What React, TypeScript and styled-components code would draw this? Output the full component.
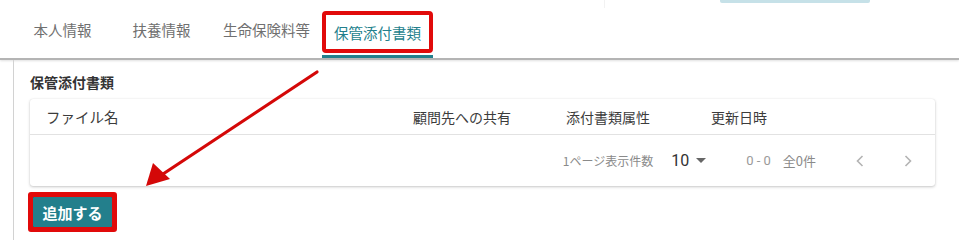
import React from "react";
import styled, { createGlobalStyle } from "styled-components";

const Global = createGlobalStyle`
  html, body { margin: 0; padding: 0; background: #fff; }
  body { font-family: "Noto Sans CJK JP", "Noto Sans", Roboto, sans-serif; color: #333; }
  * { box-sizing: border-box; }
`;

const TEAL = "#237f8c";
const RED = "#e10a0a";

const Page = styled.div`
  position: relative;
  width: 959px;
  height: 240px;
  overflow: hidden;
`;

const TabBar = styled.div`
  display: flex;
  height: 60px;
  padding-left: 13px;
  border-bottom: 2px solid #b4b4b4;
  box-shadow: 0 1px 2px rgba(0, 0, 0, 0.12);
`;

const Tab = styled.div<{ $active?: boolean; $pad?: number }>`
  min-width: 99px;
  height: 58px;
  padding: 3px ${(p) => (p.$active ? 0 : p.$pad ?? 13)}px ${(p) => (p.$active ? 2 : 0)}px;
  display: flex;
  align-items: ${(p) => (p.$active ? "flex-end" : "center")};
  justify-content: center;
  font-size: 14.5px;
  color: ${(p) => (p.$active ? TEAL : "#707070")};
  border-bottom: 3px solid ${(p) => (p.$active ? TEAL : "transparent")};
`;

const TabHighlight = styled.span`
  display: flex;
  align-items: center;
  height: 42px;
  padding: 0 8px;
  border: 4px solid ${RED};
  border-radius: 4px;
`;

const TopRight = styled.div`
  align-self: flex-start;
  margin-left: auto;
  margin-right: 89px;
  display: flex;
  gap: 115px;
`;

const FaintRule = styled.div`
  width: 1px;
  height: 8px;
  background: #f2f2f2;
`;

const BlueEdge = styled.div`
  width: 150px;
  height: 3px;
  background: #c6e1e8;
  border-radius: 0 0 2px 2px;
`;

const Panel = styled.div`
  margin-left: 13px;
  border-left: 1px solid #d2d2d2;
  padding: 12px 24px 0 16px;
  height: 180px;
`;

const SectionTitle = styled.div`
  font-size: 14px;
  font-weight: 700;
  line-height: 20px;
  color: #333;
  margin-bottom: 7px;
`;

const Card = styled.div`
  width: 905px;
  border-radius: 3px;
  background: #fff;
  box-shadow: 0 1px 3px rgba(0, 0, 0, 0.22), 0 0 1px rgba(0, 0, 0, 0.12);
`;

const HeaderRow = styled.div`
  display: grid;
  grid-template-columns: 367px 153px 145px 1fr;
  align-items: center;
  height: 36px;
  padding-left: 16px;
  border-bottom: 1px solid #e2e2e2;
  color: #3c3c3c;
`;

const HeaderCell = styled.div<{ $large?: boolean }>`
  font-size: ${(p) => (p.$large ? 14.5 : 14)}px;
`;

const Footer = styled.div`
  display: flex;
  align-items: center;
  justify-content: flex-end;
  height: 51px;
  padding-right: 15px;
  font-size: 12px;
  color: #8a8a8a;
`;

const PerPageLabel = styled.span`
  margin-right: 18px;
`;

const PerPageSelect = styled.span`
  display: flex;
  align-items: center;
  gap: 7px;
  font-family: Roboto, "Noto Sans", sans-serif;
  font-size: 16px;
  color: #333;
  margin-right: 40px;
`;

const Caret = styled.span`
  width: 0;
  height: 0;
  border-left: 5px solid transparent;
  border-right: 5px solid transparent;
  border-top: 5px solid #666;
`;

const Range = styled.span`
  font-family: Roboto, "Noto Sans", sans-serif;
  font-size: 13px;
  color: #9a9a9a;
  margin-right: 12px;
`;

const Total = styled.span`
  font-size: 13px;
  color: #8a8a8a;
  margin-right: 32px;
`;

const PageButtons = styled.span`
  display: flex;
  gap: 24px;
`;

const PageBtn = styled.span`
  display: flex;
  width: 24px;
  justify-content: center;
`;

const ButtonHighlight = styled.div`
  display: inline-flex;
  margin-top: 6px;
  margin-left: -2px;
  border: 5px solid ${RED};
  border-radius: 3px;
  background: #7a1010;
  padding: 0;
`;

const AddButton = styled.button`
  width: 79px;
  height: 30px;
  border: none;
  border-radius: 1px;
  background: ${TEAL};
  color: #fff;
  font-family: "Noto Sans CJK JP", sans-serif;
  font-size: 15px;
  font-weight: 700;
  padding: 0;
  cursor: pointer;
`;

const ArrowLayer = styled.svg`
  position: absolute;
  left: 0;
  top: 0;
  pointer-events: none;
`;

const Chevron = ({ dir }: { dir: "left" | "right" }) => (
  <svg width="8" height="12" viewBox="0 0 8 12">
    <path
      d={dir === "left" ? "M6.5 1 L1.5 6 L6.5 11" : "M1.5 1 L6.5 6 L1.5 11"}
      fill="none"
      stroke="#b3b3b3"
      strokeWidth="1.6"
    />
  </svg>
);

export default function App() {
  return (
    <Page>
      <Global />
      <TabBar>
        <Tab>本人情報</Tab>
        <Tab>扶養情報</Tab>
        <Tab $pad={12}>生命保険料等</Tab>
        <Tab $active>
          <TabHighlight>保管添付書類</TabHighlight>
        </Tab>
        <TopRight>
          <FaintRule />
          <BlueEdge />
        </TopRight>
      </TabBar>
      <Panel>
        <SectionTitle>保管添付書類</SectionTitle>
        <Card>
          <HeaderRow>
            <HeaderCell $large>ファイル名</HeaderCell>
            <HeaderCell>顧問先への共有</HeaderCell>
            <HeaderCell>添付書類属性</HeaderCell>
            <HeaderCell>更新日時</HeaderCell>
          </HeaderRow>
          <Footer>
            <PerPageLabel>1ページ表示件数</PerPageLabel>
            <PerPageSelect>
              10 <Caret />
            </PerPageSelect>
            <Range>0 - 0</Range>
            <Total>全0件</Total>
            <PageButtons>
              <PageBtn>
                <Chevron dir="left" />
              </PageBtn>
              <PageBtn>
                <Chevron dir="right" />
              </PageBtn>
            </PageButtons>
          </Footer>
        </Card>
        <ButtonHighlight>
          <AddButton>追加する</AddButton>
        </ButtonHighlight>
      </Panel>
      <ArrowLayer width="959" height="240" viewBox="0 0 959 240">
        <line x1="317" y1="72" x2="160" y2="176" stroke="#d40808" strokeWidth="3.2" strokeLinecap="round" />
        <polygon points="146,186 153,163 170,179" fill="#d40808" />
      </ArrowLayer>
    </Page>
  );
}
